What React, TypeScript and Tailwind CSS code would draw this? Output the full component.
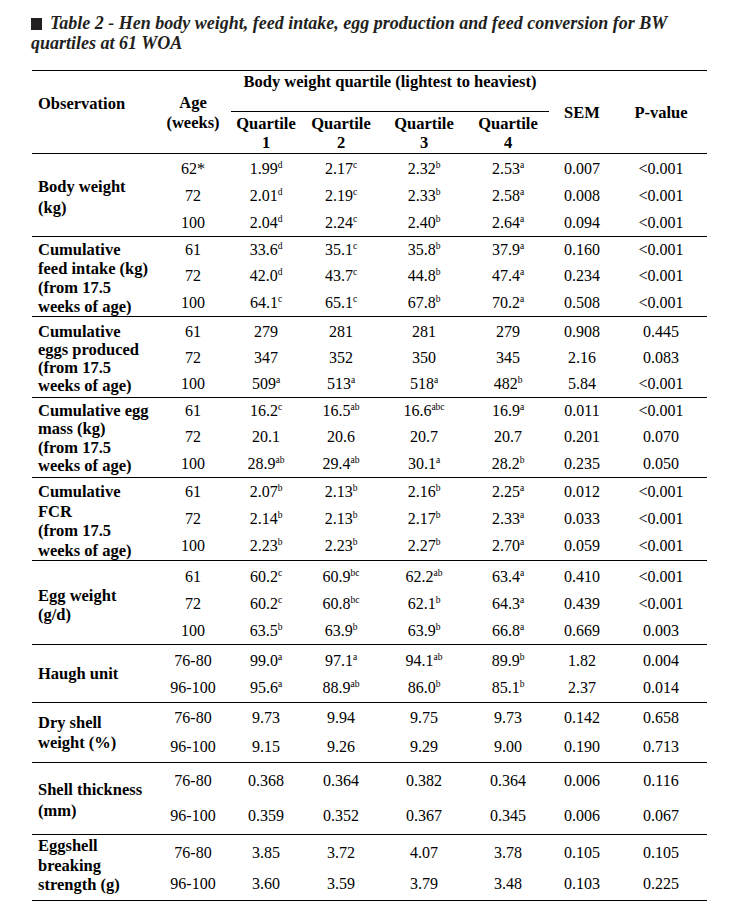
import React from "react";

type Cell = [string, string?];
type Group = {
  label: string[];
  h: string;
  labelPt: string;
  labelLh: string;
  dataPt: string;
  rowH: string;
  rows: Cell[][];
};

const c = (s: string): Cell => {
  const i = s.indexOf("|");
  return i >= 0 ? [s.slice(0, i), s.slice(i + 1)] : [s];
};
const r = (...xs: string[]): Cell[] => xs.map(c);

const groups: Group[] = [
  {
    label: ["Body weight", "(kg)"],
    h: "h-[83px]",
    labelPt: "pt-[21.5px]",
    labelLh: "leading-[21px]",
    dataPt: "pt-[2px]",
    rowH: "h-[27.5px]",
    rows: [
      r("62*", "1.99|d", "2.17|c", "2.32|b", "2.53|a", "0.007", "<0.001"),
      r("72", "2.01|d", "2.19|c", "2.33|b", "2.58|a", "0.008", "<0.001"),
      r("100", "2.04|d", "2.24|c", "2.40|b", "2.64|a", "0.094", "<0.001"),
    ],
  },
  {
    label: ["Cumulative", "feed intake (kg)", "(from 17.5", "weeks of age)"],
    h: "h-[80px]",
    labelPt: "pt-[2.5px]",
    labelLh: "leading-[19px]",
    dataPt: "pt-[0px]",
    rowH: "h-[27px]",
    rows: [
      r("61", "33.6|d", "35.1|c", "35.8|b", "37.9|a", "0.160", "<0.001"),
      r("72", "42.0|d", "43.7|c", "44.8|b", "47.4|a", "0.234", "<0.001"),
      r("100", "64.1|c", "65.1|c", "67.8|b", "70.2|a", "0.508", "<0.001"),
    ],
  },
  {
    label: ["Cumulative", "eggs produced", "(from 17.5", "weeks of age)"],
    h: "h-[81px]",
    labelPt: "pt-[6px]",
    labelLh: "leading-[18px]",
    dataPt: "pt-[1.5px]",
    rowH: "h-[27px]",
    rows: [
      r("61", "279", "281", "281", "279", "0.908", "0.445"),
      r("72", "347", "352", "350", "345", "2.16", "0.083"),
      r("100", "509|a", "513|a", "518|a", "482|b", "5.84", "<0.001"),
    ],
  },
  {
    label: ["Cumulative egg", "mass (kg)", "(from 17.5", "weeks of age)"],
    h: "h-[80px]",
    labelPt: "pt-[3.5px]",
    labelLh: "leading-[18.5px]",
    dataPt: "pt-[0px]",
    rowH: "h-[28px]",
    rows: [
      r("61", "16.2|c", "16.5|ab", "16.6|abc", "16.9|a", "0.011", "<0.001"),
      r("72", "20.1", "20.6", "20.7", "20.7", "0.201", "0.070"),
      r("100", "28.9|ab", "29.4|ab", "30.1|a", "28.2|b", "0.235", "0.050"),
    ],
  },
  {
    label: ["Cumulative", "FCR", "(from 17.5", "weeks of age)"],
    h: "h-[83px]",
    labelPt: "pt-[4px]",
    labelLh: "leading-[19.5px]",
    dataPt: "pt-[0px]",
    rowH: "h-[29px]",
    rows: [
      r("61", "2.07|b", "2.13|b", "2.16|b", "2.25|a", "0.012", "<0.001"),
      r("72", "2.14|b", "2.13|b", "2.17|b", "2.33|a", "0.033", "<0.001"),
      r("100", "2.23|b", "2.23|b", "2.27|b", "2.70|a", "0.059", "<0.001"),
    ],
  },
  {
    label: ["Egg weight", "(g/d)"],
    h: "h-[84px]",
    labelPt: "pt-[24.5px]",
    labelLh: "leading-[19px]",
    dataPt: "pt-[2px]",
    rowH: "h-[27.5px]",
    rows: [
      r("61", "60.2|c", "60.9|bc", "62.2|ab", "63.4|a", "0.410", "<0.001"),
      r("72", "60.2|c", "60.8|bc", "62.1|b", "64.3|a", "0.439", "<0.001"),
      r("100", "63.5|b", "63.9|b", "63.9|b", "66.8|a", "0.669", "0.003"),
    ],
  },
  {
    label: ["Haugh unit"],
    h: "h-[58px]",
    labelPt: "pt-[19px]",
    labelLh: "leading-[20px]",
    dataPt: "pt-[2px]",
    rowH: "h-[28px]",
    rows: [
      r("76-80", "99.0|a", "97.1|a", "94.1|ab", "89.9|b", "1.82", "0.004"),
      r("96-100", "95.6|a", "88.9|ab", "86.0|b", "85.1|b", "2.37", "0.014"),
    ],
  },
  {
    label: ["Dry shell", "weight (%)"],
    h: "h-[60px]",
    labelPt: "pt-[10px]",
    labelLh: "leading-[20px]",
    dataPt: "pt-[0px]",
    rowH: "h-[30px]",
    rows: [
      r("76-80", "9.73", "9.94", "9.75", "9.73", "0.142", "0.658"),
      r("96-100", "9.15", "9.26", "9.29", "9.00", "0.190", "0.713"),
    ],
  },
  {
    label: ["Shell thickness", "(mm)"],
    h: "h-[72px]",
    labelPt: "pt-[15.5px]",
    labelLh: "leading-[21px]",
    dataPt: "pt-[0px]",
    rowH: "h-[36px]",
    rows: [
      r("76-80", "0.368", "0.364", "0.382", "0.364", "0.006", "0.116"),
      r("96-100", "0.359", "0.352", "0.367", "0.345", "0.006", "0.067"),
    ],
  },
  {
    label: ["Eggshell", "breaking", "strength (g)"],
    h: "h-[66px]",
    labelPt: "pt-[1px]",
    labelLh: "leading-[19.5px]",
    dataPt: "pt-[2px]",
    rowH: "h-[32px]",
    rows: [
      r("76-80", "3.85", "3.72", "4.07", "3.78", "0.105", "0.105"),
      r("96-100", "3.60", "3.59", "3.79", "3.48", "0.103", "0.225"),
    ],
  },
];

const COLS = "grid grid-cols-[76px_70px_80px_86px_82px_66px_92px]";

function Val({ cell }: { cell: Cell }) {
  return (
    <span className="whitespace-nowrap">
      {cell[0]}
      {cell[1] ? (
        <span className="relative top-[-6px] text-[9.5px] leading-none">{cell[1]}</span>
      ) : null}
    </span>
  );
}

export default function App() {
  return (
    <div
      className="w-[735px] h-[923px] bg-white text-black"
      style={{ fontFamily: '"Liberation Serif", "Times New Roman", serif' }}
    >
      <div className="pl-[31px] pr-[20px] pt-[13px] text-[18px] leading-[20px] font-bold italic text-[#231f20] whitespace-nowrap">
        <span className="inline-block w-[11px] h-[12px] bg-[#231f20] align-[-1px] mr-[8px]" />
        Table 2 - Hen body weight, feed intake, egg production and feed conversion for BW
        <br />
        quartiles at 61 WOA
      </div>

      <div className="ml-[32px] mt-[17px] w-[675px] text-[16px]">
        {/* Header */}
        <div className="flex h-[84px] border-t border-b border-black font-bold text-[16.5px]">
          <div className="w-[123px] pl-[6px] pt-[23px] leading-[20px]">Observation</div>
          <div className="w-[76px] pt-[22px] leading-[20px] text-center">
            Age
            <br />
            (weeks)
          </div>
          <div className="w-[318px] flex flex-col">
            <div className="pt-[1px] h-[41px] leading-[20px] text-center border-b border-black">
              Body weight quartile (lightest to heaviest)
            </div>
            <div className="grid grid-cols-[70px_80px_86px_82px] pt-[1.5px] leading-[19px] text-center">
              <div>Quartile<br />1</div>
              <div>Quartile<br />2</div>
              <div>Quartile<br />3</div>
              <div>Quartile<br />4</div>
            </div>
          </div>
          <div className="w-[66px] pt-[32px] leading-[20px] text-center">SEM</div>
          <div className="w-[92px] pt-[32px] leading-[20px] text-center">P-value</div>
        </div>

        {/* Body */}
        {groups.map((g, gi) => (
          <div key={gi} className={`flex border-b border-black ${g.h}`}>
            <div className={`w-[123px] shrink-0 pl-[6px] font-bold text-[16.5px] ${g.labelPt} ${g.labelLh}`}>
              {g.label.map((l, li) => (
                <div key={li} className="whitespace-nowrap">{l}</div>
              ))}
            </div>
            <div className={`flex flex-col ${g.dataPt}`}>
              {g.rows.map((row, ri) => (
                <div key={ri} className={`${COLS} ${g.rowH} items-center text-center leading-[18px]`}>
                  {row.map((cell, ci) => (
                    <div key={ci}>
                      <Val cell={cell} />
                    </div>
                  ))}
                </div>
              ))}
            </div>
          </div>
        ))}
      </div>
    </div>
  );
}
